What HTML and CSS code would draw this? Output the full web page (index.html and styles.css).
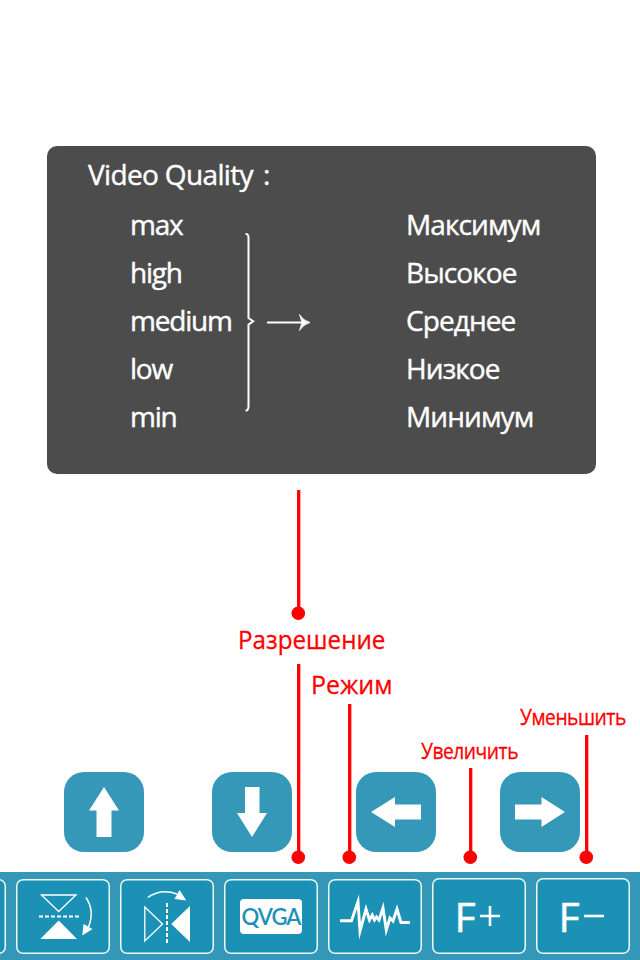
FILE: index.html
```html
<!DOCTYPE html>
<html lang="ru">
<head>
<meta charset="utf-8">
<title>Video Quality</title>
<link rel="stylesheet" href="styles.css">
</head>
<body>
<main class="screen">
  <section class="panel">
    <h1 class="title"><span class="title-text">Video Quality</span><span>:</span></h1>
    <div class="columns">
      <ul class="levels">
        <li>max</li><li>high</li><li class="medium">medium</li><li>low</li><li>min</li>
      </ul>
      <svg class="brace" width="70" height="180" viewBox="0 0 70 180" fill="none" stroke="#fff">
        <path d="M.5 2Q3.500 1.500 3.500 6V86L8.200 89.300L3.500 92.600V174Q3.500 179 .5 178.500" stroke-width="2"/>
        <path d="M22 90.500H60" stroke-width="2"/>
        <path d="M54.500 82.500Q58 88.500 65 90.500Q58 92.500 54.500 98.500L57 90.500Z" fill="#fff" stroke="#fff" stroke-width=".8"/>
      </svg>
      <ul class="names">
        <li>Максимум</li><li>Высокое</li><li>Среднее</li><li>Низкое</li><li>Минимум</li>
      </ul>
    </div>
  </section>

  <nav class="arrows">
    <button class="arrow" aria-label="Вверх"><svg width="80" height="80"><path d="M40 15L55 38.500H47.500V65H32.500V38.500H25Z"/></svg></button>
    <button class="arrow" aria-label="Вниз"><svg width="80" height="80"><path d="M40 65L55 41H47.500V15H33V41H25Z"/></svg></button>
    <button class="arrow" aria-label="Влево"><svg width="80" height="80"><path d="M15 40L39 25V32.500H65V47.500H39V55Z"/></svg></button>
    <button class="arrow" aria-label="Вправо"><svg width="80" height="80"><path d="M65 40L41.500 25V32.500H15V47.500H41.500V55Z"/></svg></button>
  </nav>

  <footer class="toolbar">
    <div class="tool"></div>
    <div class="tool"><svg width="94" height="75" fill="none" stroke="#fff">
      <path d="M25.500 16H60L42.700 32.500Z" stroke-width="1.300"/>
      <path d="M42.700 41.500L61 60H24.300Z" fill="#fff" stroke="none"/>
      <path d="M23 37.500H64" stroke-width="2" stroke-dasharray="4 2"/>
      <path d="M70 18.500Q79 32 72.500 48" stroke-width="1.500"/>
      <path d="M67.500 45L76.500 50L66.300 56.500Z" fill="#fff" stroke="none"/>
    </svg></div>
    <div class="tool"><svg width="94" height="75" fill="none" stroke="#fff">
      <path d="M24.800 28L42.500 45L24.800 62Z" stroke-width="1.300"/>
      <path d="M51.300 45L70 27V63Z" fill="#fff" stroke="none"/>
      <path d="M47 24V64.500" stroke-width="2" stroke-dasharray="4 2"/>
      <path d="M27.700 18.500Q41 9 57 15" stroke-width="1.500"/>
      <path d="M59.500 11L66.300 21.500L54.500 20Z" fill="#fff" stroke="none"/>
    </svg></div>
    <div class="tool"><span class="qvga"><span>QVGA</span></span></div>
    <div class="tool"><svg width="94" height="75" fill="none" stroke="#fff">
      <path d="M12 41.700H23.500L30 22.500L32 52L38 30L41.500 41L44.300 36L46.500 41L48.500 38L51 41L55 29L58.300 51L62 39L65 42L69 30L73 43.500H82" stroke-width="2.900" stroke-miterlimit="20"/>
    </svg></div>
    <div class="tool focus"><span class="f">F</span><svg width="20" height="20" stroke="#fff" stroke-width="2.600"><path d="M0 10H20M10 0V20"/></svg></div>
    <div class="tool focus"><span class="f">F</span><svg width="20" height="20" stroke="#fff" stroke-width="2.600"><path d="M0 10H20"/></svg></div>
  </footer>

  <svg class="leaders" width="640" height="960" stroke="red" fill="red">
    <path d="M298.700 490V613M298.700 664V857M349.700 704V857M470.700 768V857M586.700 735V857" stroke-width="3.300"/>
    <g stroke="none"><circle cx="298.300" cy="613.300" r="6.800"/><circle cx="298.300" cy="857.200" r="6.800"/><circle cx="349.300" cy="857.200" r="6.800"/><circle cx="470.300" cy="857.200" r="6.800"/><circle cx="586.300" cy="857.200" r="6.800"/></g>
  </svg>
  <span class="label resolution">Разрешение</span>
  <span class="label mode">Режим</span>
  <span class="label small increase">Увеличить</span>
  <span class="label small decrease">Уменьшить</span>
</main>
</body>
</html>
```
FILE: styles.css
```css
* { box-sizing: border-box; }
body { margin: 0; background: #fff; }
.screen {
  position: relative;
  width: 640px;
  height: 960px;
  overflow: hidden;
  display: flex;
  flex-direction: column;
  font-family: "Open Sans", "Noto Sans", sans-serif;
}
.panel {
  width: 549px;
  height: 328px;
  margin: 146px 0 0 47px;
  padding-top: 4px;
  border-radius: 10px;
  background: #4c4c4c;
  color: #fff;
  font-size: 28px;
  line-height: 48px;
  -webkit-text-stroke: 0.4px #fff;
}
.title {
  display: flex;
  gap: 10px;
  margin: 0 0 2px 41px;
  font-size: 28px;
  font-weight: 400;
  letter-spacing: -0.65px;
}
.columns { display: flex; padding-left: 83px; }
.levels, .names { margin: 0; padding: 0; list-style: none; letter-spacing: -0.9px; }
.levels { width: 115px; letter-spacing: -1.2px; }
.brace { margin-top: 32px; }
.names { margin-left: 91px; }
.arrows { display: flex; margin: 298px 0 0 64px; }
.arrow {
  width: 80px;
  height: 80px;
  padding: 0;
  border: 0;
  border-radius: 20px;
  background: #3698b8;
  fill: #fff;
}
.arrow svg { display: block; }
.arrow + .arrow { margin-left: 64px; }
.arrow:nth-child(2) { margin-left: 68px; }
.toolbar {
  display: flex;
  gap: 10px;
  height: 88px;
  margin-top: 20px;
  padding-top: 7px;
  background: #3698b8;
}
.tool {
  display: flex;
  flex: none;
  align-items: center;
  justify-content: center;
  width: 94px;
  height: 75px;
  border-radius: 7px;
  background: #1c91b6;
  box-shadow: inset 0 0 0 1.5px #eefaf0;
}
.tool > svg { flex: none; }
.tool:first-child { margin-left: -88px; }
.qvga {
  display: flex;
  align-items: center;
  justify-content: center;
  width: 62px;
  height: 35px;
  border-radius: 4px;
  background: #fff;
  color: #1c91b6;
  font: 600 22px/35px Lato, sans-serif;
  letter-spacing: -1px;
}
.focus { height: 76px; margin-top: -1px; gap: 4px; padding-right: 4px; color: #fff; }
.f { font-size: 41px; line-height: 74px; -webkit-text-stroke: 0.5px #fff; }
.leaders { position: absolute; left: 0; top: 0; }
.label {
  position: absolute;
  color: red;
  font-size: 26px;
  line-height: 36px;
  white-space: nowrap;
  transform: scaleX(0.93);
  transform-origin: left;
  -webkit-text-stroke: 0.3px red;
}
.small { font-size: 21px; line-height: 30px; letter-spacing: -0.5px; transform: scaleX(0.915); }
.resolution { left: 238px; top: 621px; }
.mode { left: 311px; top: 666px; transform: scaleX(0.96); }
.increase { left: 421px; top: 736px; }
.decrease { left: 520px; top: 702px; }
```
